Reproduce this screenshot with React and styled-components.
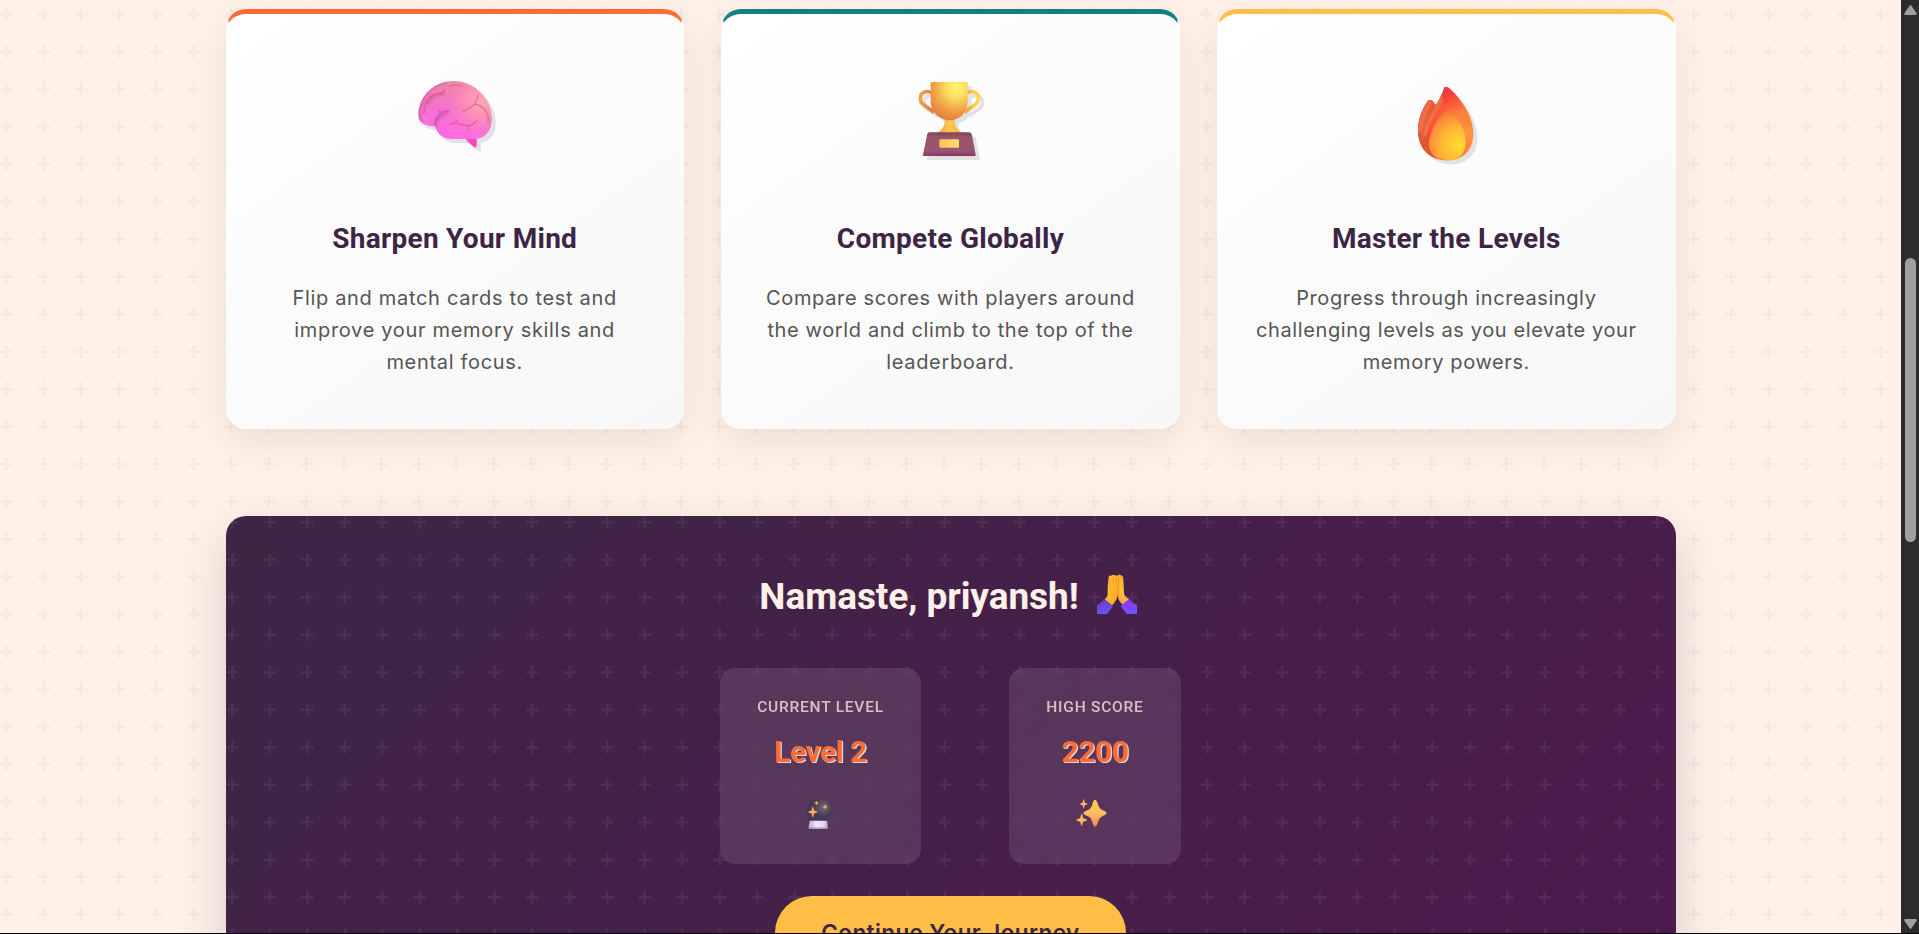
import React from "react";
import styled, { createGlobalStyle } from "styled-components";

const plus = (color, opacity) =>
  `url("data:image/svg+xml,%3Csvg width='75' height='75' viewBox='0 0 60 60' xmlns='http://www.w3.org/2000/svg'%3E%3Cpath d='M36 34v-4h-2v4h-4v2h4v4h2v-4h4v-2h-4zm0-30V0h-2v4h-4v2h4v4h2V6h4V4h-4zM6 34v-4H4v4H0v2h4v4h2v-4h4v-2H6zM6 4V0H4v4H0v2h4v4h2V6h4V4H6z' fill='%23${color}' fill-opacity='${opacity}'/%3E%3C/svg%3E")`;

const colors = {
  cream: "#fff0e8",
  plum: "#3d2645",
  violet: "#4d194d",
  orange: "#ff6b35",
  teal: "#138086",
  amber: "#ffbf46",
};

const Global = createGlobalStyle`
  * { box-sizing: border-box; }
  body { margin: 0; background: #000; overflow: hidden; }
  h2, h3, p { margin: 0; }
`;

const Viewport = styled.div`
  display: flex;
  height: 934px;
  border-bottom: 1px solid #000;
  overflow: hidden;
`;

const Page = styled.main`
  flex: 1;
  min-width: 0;
  height: 933px;
  overflow: hidden;
  padding-top: 9px;
  background: ${plus("138086", 0.055)} 0 7.5px, ${colors.cream};
`;

const Container = styled.div`
  width: 1450px;
  margin: 0 auto;
`;

const Features = styled.section`
  display: grid;
  grid-template-columns: repeat(3, 1fr);
  gap: 37.5px;
`;

const Card = styled.article`
  display: flex;
  flex-direction: column;
  align-items: center;
  height: 420px;
  padding: 46px 36px 0;
  border: 1px solid rgba(255, 255, 255, 0.2);
  border-top: 5px solid ${(p) => p.$accent};
  border-radius: 20px;
  background: linear-gradient(145deg, #ffffff, #f7f7f7);
  box-shadow: 0 12.5px 37.5px rgba(0, 0, 0, 0.08);
`;

const Illustration = styled.svg`
  width: 100px;
  height: 100px;
  overflow: visible;
  filter: drop-shadow(4px 4px 0 rgba(0, 0, 0, 0.1));
`;

const CardTitle = styled.h3`
  margin-top: 59px;
  font: 700 28px/40px Roboto, sans-serif;
  letter-spacing: 0.28px;
  color: ${colors.plum};
  white-space: nowrap;
`;

const CardText = styled.p`
  margin-top: 23px;
  font: 400 20px/32px Inter, sans-serif;
  letter-spacing: ${(p) => p.$track}px;
  color: #555;
  text-align: center;
  white-space: nowrap;
`;

const Banner = styled.section`
  display: flex;
  flex-direction: column;
  align-items: center;
  height: 520px;
  margin-top: 87px;
  padding-top: 57px;
  border-radius: 20px;
  background: ${plus("ffffff", 0.06)}, linear-gradient(135deg, ${colors.plum}, ${colors.violet});
  box-shadow: 0 18.75px 50px rgba(0, 0, 0, 0.15);
`;

const Greeting = styled.h2`
  display: flex;
  align-items: center;
  gap: 17px;
  height: 48px;
  font: 700 37px/48px Roboto, sans-serif;
  letter-spacing: -0.06px;
  color: ${colors.cream};
`;

const Hands = styled.svg`
  width: 46px;
  height: 40px;
  margin-bottom: 6px;
`;

const Stats = styled.div`
  display: flex;
  gap: 88px;
  margin-top: 47px;
`;

const Stat = styled.div`
  display: flex;
  flex-direction: column;
  align-items: center;
  width: ${(p) => p.$width}px;
  height: 196px;
  padding-top: 29px;
  border-radius: 15px;
  background: rgba(255, 255, 255, 0.1);
  backdrop-filter: blur(6px);
`;

const StatLabel = styled.span`
  font: 500 15.5px/20px Roboto, sans-serif;
  letter-spacing: 0.78px;
  text-transform: uppercase;
  color: rgba(255, 240, 232, 0.75);
  white-space: nowrap;
`;

const StatValue = styled.strong`
  margin-top: 15px;
  font: 700 30px/40px Roboto, sans-serif;
  letter-spacing: -0.5px;
  color: ${colors.orange};
  text-shadow: 1.25px 1.25px 0 rgba(255, 255, 255, 0.8);
`;

const StatIcon = styled.svg`
  width: 40px;
  height: 32px;
  margin-top: 25px;
`;

const Continue = styled.button`
  width: 351px;
  height: 74px;
  margin-top: 32px;
  border: 0;
  border-radius: 37px;
  background: ${colors.amber};
  color: ${colors.plum};
  font: 600 22.5px/34px Inter, sans-serif;
  letter-spacing: 0.4px;
  flex-shrink: 0;
`;

const Scrollbar = styled.aside`
  display: flex;
  flex-direction: column;
  align-items: center;
  width: 18px;
  height: 933px;
  padding: 5px 0 4px 1px;
  background: #2c2c2c;
`;

const Arrow = styled.svg`
  width: 13px;
  height: 10px;
  fill: #9f9f9f;
`;

const Thumb = styled.div`
  width: 11px;
  height: 284px;
  margin: 243px 0 auto;
  border-radius: 6px;
  background: #9f9f9f;
`;

const star = (x, y, rx, ry) => {
  const a = rx * 0.28;
  const b = ry * 0.28;
  return `M${x} ${y - ry}Q${x + a * 0.4} ${y - ry} ${x + a} ${y - b}Q${x + rx} ${y - b * 0.4} ${x + rx} ${y}Q${x + rx} ${y + b * 0.4} ${x + a} ${y + b}Q${x + a * 0.4} ${y + ry} ${x} ${y + ry}Q${x - a * 0.4} ${y + ry} ${x - a} ${y + b}Q${x - rx} ${y + b * 0.4} ${x - rx} ${y}Q${x - rx} ${y - b * 0.4} ${x - a} ${y - b}Q${x - a * 0.4} ${y - ry} ${x} ${y - ry}Z`;
};

const brainShape =
  "M54 166C54 108 102 63 160 63C218 63 274 112 274 178C274 214 254 237 222 237H152C127 237 112 222 104 199C76 200 54 190 54 166Z";

function Brain() {
  return (
    <Illustration viewBox="14 0 300 300">
      <defs>
        <linearGradient id="brBase" x1="0.35" y1="0" x2="0.3" y2="1">
          <stop offset="0" stopColor="#f087a3" />
          <stop offset="0.45" stopColor="#f373cc" />
          <stop offset="1" stopColor="#ff6be6" />
        </linearGradient>
        <radialGradient id="brPeach" gradientUnits="userSpaceOnUse" cx="245" cy="125" r="110">
          <stop offset="0" stopColor="#ffa8b9" />
          <stop offset="0.45" stopColor="#ff92b4" stopOpacity="0.85" />
          <stop offset="1" stopColor="#ff80c0" stopOpacity="0" />
        </radialGradient>
        <clipPath id="brClip"><path d={brainShape} /></clipPath>
        <filter id="brSoft" x="-30%" y="-30%" width="160%" height="160%"><feGaussianBlur stdDeviation="5" /></filter>
      </defs>
      <path d="M196 234H229V258Q227 264 221 261Q210 254 196 237Z" fill="#fc45be" />
      <path d={brainShape} fill="url(#brBase)" />
      <g clipPath="url(#brClip)" fill="none" strokeLinecap="round">
        <rect x="130" y="60" width="150" height="180" fill="url(#brPeach)" />
        <path d="M58 185C48 120 85 75 135 66" stroke="#bd5b92" strokeWidth="9" filter="url(#brSoft)" opacity="0.7" />
        <path d="M82 134C95 105 112 103 128 103" stroke="#c94f92" strokeWidth="9" filter="url(#brSoft)" opacity="0.5" />
        <path d="M105 210C103 185 115 165 140 157" stroke="#b94196" strokeWidth="9" filter="url(#brSoft)" opacity="0.6" />
        <path d="M85 155L110 160M112 215L135 218" stroke="#f86be7" strokeWidth="12" filter="url(#brSoft)" opacity="0.9" />
        <g opacity="0.72">
          <path d="M71 160C71 130 85 99 125 99Q134 97 132 89" stroke="#d3527e" strokeWidth="4" />
          <path d="M146 80Q166 69 186 80" stroke="#d96282" strokeWidth="3.5" />
          <path d="M234 105L224 132Q205 149 187 154M224 132C251 138 265 157 263 187" stroke="#e55f85" strokeWidth="4" />
          <path d="M112 149Q119 157 123 158Q131 153 145 154M105 190Q106 168 123 158" stroke="#ce479f" strokeWidth="3.5" />
          <path d="M148 191Q162 195 170 182M170 190Q187 197 202 197Q220 196 229 180M202 197L205 211" stroke="#de4a98" strokeWidth="3.5" />
        </g>
      </g>
    </Illustration>
  );
}

function Trophy() {
  return (
    <Illustration viewBox="1 -30 300 300">
      <defs>
        <radialGradient id="trCup" gradientUnits="userSpaceOnUse" cx="170" cy="53" r="112">
          <stop offset="0" stopColor="#fff96f" />
          <stop offset="0.28" stopColor="#fbdc5e" />
          <stop offset="0.65" stopColor="#ee9a43" />
          <stop offset="0.82" stopColor="#e98640" />
          <stop offset="1" stopColor="#d66b59" />
        </radialGradient>
        <linearGradient id="trHandle" gradientUnits="userSpaceOnUse" x1="58" y1="0" x2="240" y2="0">
          <stop offset="0" stopColor="#f0a83a" />
          <stop offset="0.2" stopColor="#dc8049" />
          <stop offset="0.8" stopColor="#efac3c" />
          <stop offset="0.92" stopColor="#ffd34e" />
        </linearGradient>
        <linearGradient id="trStem"><stop stopColor="#ee963b" /><stop offset="0.5" stopColor="#ffcc4e" /><stop offset="1" stopColor="#f0a53a" /></linearGradient>
        <linearGradient id="trBase" x1="0" y1="0" x2="0" y2="1"><stop stopColor="#83434f" /><stop offset="0.2" stopColor="#965569" /><stop offset="0.78" stopColor="#9a5570" /><stop offset="1" stopColor="#86376d" /></linearGradient>
        <linearGradient id="trPlate"><stop stopColor="#ffc05c" /><stop offset="1" stopColor="#ffdf68" /></linearGradient>
      </defs>
      <path d="M97 69C83 60 63 65 62 84C61 105 82 108 103 127M201 69C215 60 235 65 236 84C237 105 216 108 195 127" fill="none" stroke="url(#trHandle)" strokeWidth="11" />
      <path d="M135 143H165C164 163 168 176 186 188H114C132 176 137 163 135 143Z" fill="url(#trStem)" />
      <path d="M97 36H201Q204 36 204 40V94C204 127 181 151 150 151C118 151 93 124 93 94V40Q93 36 97 36Z" fill="url(#trCup)" />
      <path d="M91 187H207Q215 187 217 196L228 254Q229 258 225 258H73Q69 258 70 254L82 196Q83 187 91 187Z" fill="url(#trBase)" />
      <rect x="119" y="208" width="59" height="25" rx="4" fill="url(#trPlate)" />
    </Illustration>
  );
}

const flameShape =
  "M139 50C145 50 150 54 155 60C195 100 221 145 221 191C221 240 190 271 143 271C90 271 55 235 55 180C55 150 68 115 84 93Q90 88 97 91Q103 96 107 105C117 95 126 75 132 56Q134 50 139 50Z";

function Flame() {
  return (
    <Illustration viewBox="-11 -30 300 300">
      <defs>
        <radialGradient id="flOuter" gradientUnits="userSpaceOnUse" cx="205" cy="190" r="155">
          <stop offset="0" stopColor="#ff963e" />
          <stop offset="0.45" stopColor="#ff7d3c" />
          <stop offset="0.8" stopColor="#fa4038" />
          <stop offset="1" stopColor="#ed3c3c" />
        </radialGradient>
        <radialGradient id="flInner" gradientUnits="userSpaceOnUse" cx="178" cy="225" r="115">
          <stop offset="0" stopColor="#ffdc2e" />
          <stop offset="0.4" stopColor="#ffbd34" />
          <stop offset="0.75" stopColor="#fb9139" />
          <stop offset="1" stopColor="#f36b38" />
        </radialGradient>
        <clipPath id="flClip"><path d={flameShape} /></clipPath>
        <filter id="flSoft" x="-40%" y="-40%" width="180%" height="180%"><feGaussianBlur stdDeviation="4" /></filter>
      </defs>
      <path d={flameShape} fill="url(#flOuter)" />
      <g clipPath="url(#flClip)">
        <path d="M137 45C135 90 110 120 88 155C70 185 82 225 110 262L70 275L40 200L80 85L107 100Z" fill="#dd5a32" filter="url(#flSoft)" />
        <path d="M92 94C77 120 64 150 61 182" fill="none" stroke="#f4704d" strokeWidth="14" strokeLinecap="round" filter="url(#flSoft)" />
        <path d="M125 88C115 120 85 145 75 195" fill="none" stroke="#f07f4c" strokeWidth="10" strokeLinecap="round" filter="url(#flSoft)" />
        <path d="M57 195C60 225 75 250 100 264" fill="none" stroke="#e6523c" strokeWidth="8" filter="url(#flSoft)" />
        <path d="M138 52L133 82" stroke="#e53c45" strokeWidth="12" strokeLinecap="round" filter="url(#flSoft)" />
      </g>
      <path d="M147 120C165 130 198 175 198 215C198 250 180 271 145 271C108 271 88 250 88 222C88 180 125 128 147 120Z" fill="url(#flInner)" />
    </Illustration>
  );
}

function FoldedHands() {
  return (
    <Hands viewBox="45 45 138 120">
      <defs>
        <linearGradient id="hdL" x1="0" y1="0" x2="1" y2="1"><stop stopColor="#ffc83e" /><stop offset="0.7" stopColor="#ffad22" /><stop offset="1" stopColor="#f69a36" /></linearGradient>
        <linearGradient id="hdR" x1="0" y1="0" x2="0" y2="1"><stop stopColor="#f7a629" /><stop offset="0.5" stopColor="#ffc633" /><stop offset="1" stopColor="#f59b58" /></linearGradient>
        <linearGradient id="hdSl" x1="0" y1="0" x2="0.4" y2="1"><stop stopColor="#6934bd" /><stop offset="1" stopColor="#6b55f5" /></linearGradient>
        <radialGradient id="hdSr" cx="0.4" cy="0.25" r="0.8"><stop stopColor="#9333f2" /><stop offset="1" stopColor="#6558fb" /></radialGradient>
      </defs>
      <path d="M108 52Q112 43 118 48Q127 49 127 61L129 101Q130 113 144 120L131 141Q116 132 111 116Z" fill="url(#hdR)" />
      <path d="M80 84L83 54Q85 48 91 50Q96 45 101 49Q110 48 112 58L111 106Q108 126 92 140L70 122Q81 113 80 103Z" fill="url(#hdL)" />
      <path d="M86 76L88 57M96 76L97 54M106 82L106 56" stroke="#df8e20" strokeWidth="2" fill="none" />
      <path d="M113 60V110Q112 120 117 127" stroke="#d88321" strokeWidth="2" fill="none" />
      <path d="M70 119L96 141L78 165H48V137Q60 134 70 119Z" fill="url(#hdSl)" />
      <path d="M145 119L119 141L137 165H168V137Q155 134 145 119Z" fill="url(#hdSr)" />
    </Hands>
  );
}

function CrystalBall() {
  return (
    <StatIcon viewBox="61.5 52 120 96">
      <defs>
        <radialGradient id="cbGlass" cx="0.7" cy="0.35" r="0.7"><stop stopColor="#716780" /><stop offset="0.55" stopColor="#463a51" /><stop offset="1" stopColor="#493367" /></radialGradient>
        <linearGradient id="cbBase"><stop stopColor="#bda9cf" /><stop offset="0.4" stopColor="#f2e7fb" /><stop offset="0.8" stopColor="#e3d4f1" /><stop offset="1" stopColor="#b69cd0" /></linearGradient>
        <linearGradient id="gold" x1="0" y1="0" x2="0" y2="1"><stop stopColor="#ffcb56" /><stop offset="1" stopColor="#ff8b59" /></linearGradient>
      </defs>
      <circle cx="114" cy="94" r="38" fill="url(#cbGlass)" />
      <path d="M88 123H139Q141 123 142 144Q142 147 138 147H87Q84 147 84 143Z" fill="url(#cbBase)" />
      <path d="M85 145H142" stroke="#ad7dc6" strokeWidth="3" />
      <path d={star(97, 97, 14, 16)} fill="url(#gold)" />
      <path d={star(108, 70, 7, 7)} fill="url(#gold)" />
      <path d={star(134, 82, 8, 8)} fill="url(#gold)" />
    </StatIcon>
  );
}

function Sparkles() {
  return (
    <StatIcon viewBox="885 52 120 96">
      <defs>
        <linearGradient id="spGold" x1="0" y1="0" x2="0" y2="1"><stop stopColor="#ffcd56" /><stop offset="0.5" stopColor="#ffbc61" /><stop offset="1" stopColor="#fa8058" /></linearGradient>
      </defs>
      <path d="M945 60Q950 60 955 77Q958 88 969 92Q980 96 980 101Q980 105 969 109Q959 112 955 124Q950 141 945 141Q940 141 936 124Q932 112 922 109Q910 105 910 101Q910 96 922 92Q933 88 936 77Q940 60 945 60Z" fill="url(#spGold)" />
      <path d={star(911, 73, 12, 14)} fill="url(#spGold)" />
      <path d={star(905, 121, 16, 18)} fill="url(#spGold)" />
    </StatIcon>
  );
}

const features = [
  { icon: Brain, accent: colors.orange, title: "Sharpen Your Mind", track: 0.68, lines: ["Flip and match cards to test and", "improve your memory skills and", "mental focus."] },
  { icon: Trophy, accent: colors.teal, title: "Compete Globally", track: 0.64, lines: ["Compare scores with players around", "the world and climb to the top of the", "leaderboard."] },
  { icon: Flame, accent: colors.amber, title: "Master the Levels", track: 0.6, lines: ["Progress through increasingly", "challenging levels as you elevate your", "memory powers."] },
];

export default function App() {
  return (
    <>
      <Global />
      <Viewport>
        <Page>
          <Container>
            <Features>
              {features.map(({ icon: Icon, accent, title, track, lines }) => (
                <Card key={title} $accent={accent}>
                  <Icon />
                  <CardTitle>{title}</CardTitle>
                  <CardText $track={track}>
                    {lines[0]}<br />{lines[1]}<br />{lines[2]}
                  </CardText>
                </Card>
              ))}
            </Features>
            <Banner>
              <Greeting>
                <span>Namaste, priyansh!</span>
                <FoldedHands />
              </Greeting>
              <Stats>
                <Stat $width={201}>
                  <StatLabel>Current Level</StatLabel>
                  <StatValue>Level 2</StatValue>
                  <CrystalBall />
                </Stat>
                <Stat $width={172}>
                  <StatLabel>High Score</StatLabel>
                  <StatValue>2200</StatValue>
                  <Sparkles />
                </Stat>
              </Stats>
              <Continue>Continue Your Journey</Continue>
            </Banner>
          </Container>
        </Page>
        <Scrollbar>
          <Arrow viewBox="0 0 13 10"><path d="M5.6.7Q6.5-.5 7.4.7L12.6 8.2Q13.2 10 11.6 10H1.4Q-.2 10 .4 8.2Z" /></Arrow>
          <Thumb />
          <Arrow viewBox="0 0 13 10"><path d="M5.6 9.3Q6.5 10.5 7.4 9.3L12.6 1.8Q13.2 0 11.6 0H1.4Q-.2 0 .4 1.8Z" /></Arrow>
        </Scrollbar>
      </Viewport>
    </>
  );
}
